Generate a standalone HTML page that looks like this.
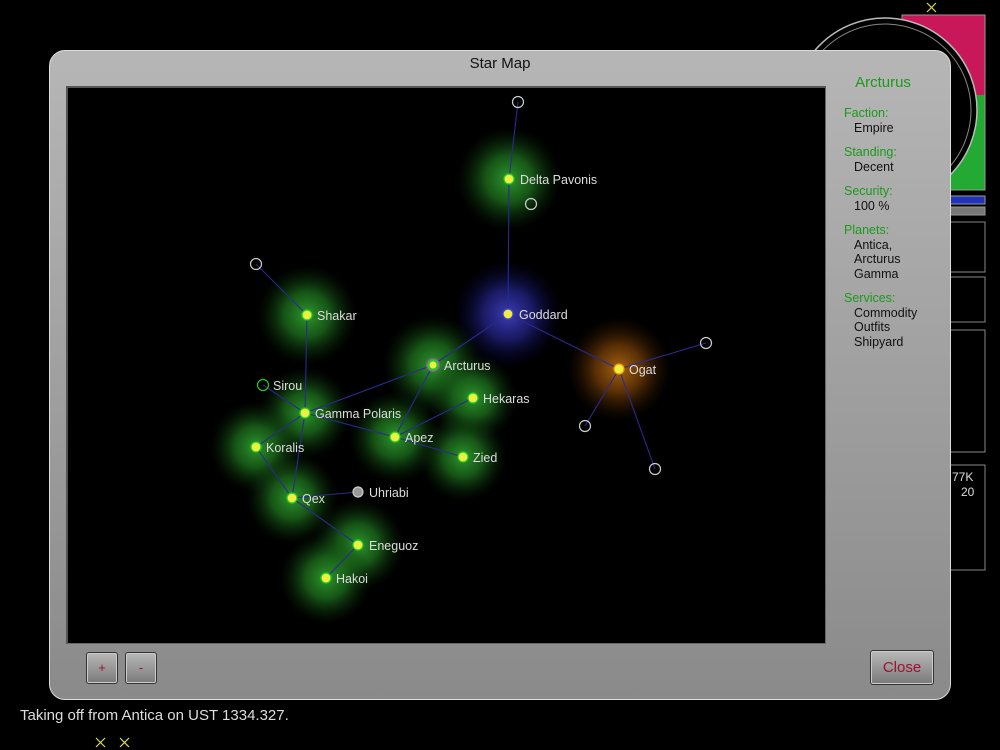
<!DOCTYPE html>
<html><head><meta charset="utf-8"><style>
body{margin:0;width:1000px;height:750px;background:#000;position:relative;overflow:hidden;font-family:"Liberation Sans",sans-serif}
.abs{position:absolute}
#dlg{left:49px;top:50px;width:902px;height:650px;border-radius:16px;background:linear-gradient(#b6b6b6,#8a8a8a);border:1px solid #ddd;box-sizing:border-box}
#map{left:66px;top:86px;width:760px;height:558px;background:#000;border:1px solid #666;box-sizing:border-box;border-top:2px solid #555;border-left:2px solid #555}
.title{left:49px;width:902px;top:55px;text-align:center;font-size:15px;color:#111}
.info{left:844px;font-size:12.5px;line-height:14.5px}
.info .g{color:#1a9a1a}
.info .v{color:#111;padding-left:10px}
.btn{border:1px solid #333;border-radius:3px;background:linear-gradient(#b8b8b8,#7a7a7a);color:#a01030;text-align:center;box-shadow:inset 0 0 0 1px #ccc}
</style></head><body>
<svg class="abs" style="left:0;top:0" width="1000" height="750">
<rect x="902" y="15" width="83" height="80" fill="#c8185a"/>
<rect x="902" y="95" width="83" height="95" fill="#22aa33"/>
<rect x="902" y="15" width="83" height="175" fill="none" stroke="#999"/>
<circle cx="885" cy="110" r="92" fill="#000"/>
<circle cx="885" cy="110" r="92" fill="none" stroke="#bbb" stroke-width="1.5"/>
<circle cx="885" cy="110" r="86" fill="none" stroke="#888" stroke-width="1"/>
<rect x="920" y="196" width="65" height="8" fill="#2233bb" stroke="#999"/>
<rect x="920" y="207" width="65" height="8" fill="#777" stroke="#999"/>
<rect x="920" y="222" width="65" height="50" fill="none" stroke="#888"/>
<rect x="920" y="277" width="65" height="45" fill="none" stroke="#888"/>
<rect x="920" y="330" width="65" height="122" fill="none" stroke="#888"/>
<rect x="920" y="465" width="65" height="105" fill="none" stroke="#888"/>
<text x="952" y="481" fill="#ddd" font-size="12" font-family="Liberation Sans">77K</text>
<text x="961" y="496" fill="#ddd" font-size="12" font-family="Liberation Sans">20</text>
<g stroke="#dde040" stroke-width="1.2"><path d="M927 3l9 9M936 3l-9 9"/><path d="M96 738l9 9M105 738l-9 9"/><path d="M120 738l9 9M129 738l-9 9"/></g>
</svg>
<div id="dlg" class="abs"></div>
<div class="abs title">Star Map</div>
<div id="map" class="abs"></div>
<svg class="abs" style="left:68px;top:88px" width="757" height="555" viewBox="68 88 757 555">
<defs>
<radialGradient id="gg"><stop offset="0" stop-color="#30a030" stop-opacity=".95"/><stop offset=".45" stop-color="#207a20" stop-opacity=".7"/><stop offset="1" stop-color="#0a300a" stop-opacity="0"/></radialGradient>
<radialGradient id="bg"><stop offset="0" stop-color="#4040c0" stop-opacity=".95"/><stop offset=".45" stop-color="#262690" stop-opacity=".7"/><stop offset="1" stop-color="#000030" stop-opacity="0"/></radialGradient>
<radialGradient id="og"><stop offset="0" stop-color="#b06a10" stop-opacity=".95"/><stop offset=".45" stop-color="#804408" stop-opacity=".7"/><stop offset="1" stop-color="#301800" stop-opacity="0"/></radialGradient>
</defs>
<g>
<circle cx="509" cy="179" r="52" fill="url(#gg)"/>
<circle cx="508" cy="314" r="55" fill="url(#bg)"/>
<circle cx="619" cy="369" r="52" fill="url(#og)"/>
<circle cx="307" cy="315" r="50" fill="url(#gg)"/>
<circle cx="433" cy="365" r="50" fill="url(#gg)"/>
<circle cx="305" cy="413" r="46" fill="url(#gg)"/>
<circle cx="473" cy="398" r="44" fill="url(#gg)"/>
<circle cx="395" cy="437" r="46" fill="url(#gg)"/>
<circle cx="463" cy="457" r="44" fill="url(#gg)"/>
<circle cx="256" cy="447" r="46" fill="url(#gg)"/>
<circle cx="292" cy="498" r="46" fill="url(#gg)"/>
<circle cx="358" cy="545" r="46" fill="url(#gg)"/>
<circle cx="326" cy="578" r="46" fill="url(#gg)"/>
</g>
<g stroke="#2a2a90" stroke-width="1.1" fill="none">
<path d="M518 102L509 179L508 314M508 314L433 365M508 314L619 369L706 343M619 369L585 426M619 369L655 469M256 264L307 315L305 413M263 385L305 413L433 365L395 437L305 413M395 437L473 398M395 437L463 457M305 413L256 447L292 498L305 413M292 498L358 545L326 578M292 498L358 492"/>
</g>
<g fill="none" stroke="#ccc" stroke-width="1.2">
<circle cx="518" cy="102" r="5.5"/><circle cx="531" cy="204" r="5.5"/><circle cx="256" cy="264" r="5.5"/>
<circle cx="706" cy="343" r="5.5"/><circle cx="585" cy="426" r="5.5"/><circle cx="655" cy="469" r="5.5"/>
</g>
<circle cx="263" cy="385" r="5.5" fill="none" stroke="#2c2" stroke-width="1.2"/>
<g stroke="#2c2" stroke-width="1.2" fill="#eef040">
<circle cx="509" cy="179" r="5"/><circle cx="307" cy="315" r="5"/><circle cx="305" cy="413" r="5"/>
<circle cx="473" cy="398" r="5"/><circle cx="395" cy="437" r="5"/><circle cx="463" cy="457" r="5"/>
<circle cx="256" cy="447" r="5"/><circle cx="292" cy="498" r="5"/><circle cx="358" cy="545" r="5"/><circle cx="326" cy="578" r="5"/>
</g>
<circle cx="508" cy="314" r="5" fill="#eef040" stroke="#44c" stroke-width="1.2"/>
<circle cx="619" cy="369" r="5" fill="#eef040" stroke="#e90" stroke-width="1.2"/>
<circle cx="433" cy="365" r="6.5" fill="#2c2" stroke="#a4a" stroke-width="1.2"/><circle cx="433" cy="365" r="3.5" fill="#eef040"/>
<circle cx="358" cy="492" r="5" fill="#999" stroke="#ccc" stroke-width="1.2"/>
<g fill="#ddd" font-size="12.5" font-family="Liberation Sans">
<text x="520" y="184">Delta Pavonis</text><text x="519" y="319">Goddard</text><text x="629" y="374">Ogat</text>
<text x="317" y="320">Shakar</text><text x="273" y="390">Sirou</text><text x="444" y="370">Arcturus</text>
<text x="315" y="418">Gamma Polaris</text><text x="483" y="403">Hekaras</text><text x="405" y="442">Apez</text>
<text x="473" y="462">Zied</text><text x="266" y="452">Koralis</text><text x="302" y="503">Qex</text>
<text x="369" y="497">Uhriabi</text><text x="369" y="550">Eneguoz</text><text x="336" y="583">Hakoi</text>
</g>
</svg>
<div class="abs" style="left:843px;top:74px;width:80px;text-align:center;color:#1a9a1a;font-size:15px">Arcturus</div>
<div class="abs info" style="top:106px">
<div class="g">Faction:</div><div class="v">Empire</div>
<div class="g" style="margin-top:10px">Standing:</div><div class="v">Decent</div>
<div class="g" style="margin-top:10px">Security:</div><div class="v">100 %</div>
<div class="g" style="margin-top:10px">Planets:</div><div class="v">Antica,<br>Arcturus<br>Gamma</div>
<div class="g" style="margin-top:10px">Services:</div><div class="v">Commodity<br>Outfits<br>Shipyard</div>
</div>
<div class="abs btn" style="left:86px;top:652px;width:30px;height:30px;line-height:30px;font-size:13px">+</div>
<div class="abs btn" style="left:125px;top:652px;width:30px;height:30px;line-height:30px;font-size:13px">-</div>
<div class="abs btn" style="left:870px;top:650px;width:62px;height:33px;line-height:33px;font-size:15px">Close</div>
<div class="abs" style="left:20px;top:707px;color:#ddd;font-size:15px">Taking off from Antica on UST 1334.327.</div>
</body></html>
